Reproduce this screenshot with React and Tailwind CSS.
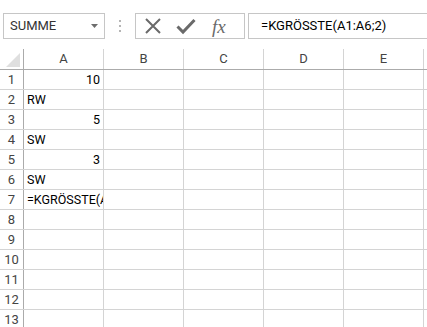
import React from 'react';

const cols = ['A', 'B', 'C', 'D', 'E'];

const data = {
  1: { v: '10', right: true },
  2: { v: 'RW' },
  3: { v: '5', right: true },
  4: { v: 'SW' },
  5: { v: '3', right: true },
  6: { v: 'SW' },
  7: { v: '=KGRÖSSTE(A1:A6;2)' },
};

const rows = Array.from({ length: 13 }, (_, i) => i + 1);

const Toolbar = () => (
  <div className="flex h-[49px] items-start pt-[13px] bg-white">
    {/* name box */}
    <div className="ml-[3px] w-[102px] h-[26px] border border-[#c6c6c6] flex items-center justify-between pl-[6px] pr-[6px]">
      <span className="text-[13px] text-[#333]">SUMME</span>
      <svg width="7" height="4" viewBox="0 0 7 4">
        <polygon points="0,0 7,0 3.5,4" fill="#6d6d6d" />
      </svg>
    </div>

    {/* grip dots */}
    <div className="w-[30px] h-[26px] flex flex-col items-center justify-center gap-[3px]">
      <div className="w-[2px] h-[2px] bg-[#b5b5b5]" />
      <div className="w-[2px] h-[2px] bg-[#b5b5b5]" />
      <div className="w-[2px] h-[2px] bg-[#b5b5b5]" />
    </div>

    {/* cancel / enter / fx */}
    <div className="w-[110px] h-[26px] border border-[#c6c6c6] flex items-center pl-[8px]">
      <svg width="18" height="18" viewBox="0 0 18 18" className="mr-[14px]">
        <path d="M2 2 L16 16 M16 2 L2 16" stroke="#6a6a6a" strokeWidth="2" />
      </svg>
      <svg width="20" height="18" viewBox="0 0 20 18" className="mr-[16px]">
        <path d="M1.5 9.5 L7 15 L18.5 3" stroke="#6a6a6a" strokeWidth="3" fill="none" />
      </svg>
      <span className="text-[19px] italic text-[#6a6a6a] leading-none font-['Liberation_Serif',serif]">fx</span>
    </div>

    {/* formula input */}
    <div className="ml-[3px] flex-1 h-[26px] border-y border-l border-[#c6c6c6] flex items-center pl-[12px]">
      <span className="text-[13px] text-black">=KGRÖSSTE(A1:A6;2)</span>
    </div>
  </div>
);

const HeaderRow = () => (
  <div className="flex h-[21px] border-b border-[#ababab]">
    <div className="w-[24px] border-r border-[#ababab] relative">
      <svg width="14" height="14" viewBox="0 0 14 14" className="absolute right-[3px] bottom-[2px]">
        <polygon points="14,0 14,14 0,14" fill="#dfdfdf" />
      </svg>
    </div>
    {cols.map((c) => (
      <div
        key={c}
        className="w-[80px] border-r border-[#d4d4d4] flex items-center justify-center text-[13px] text-[#444]"
      >
        {c}
      </div>
    ))}
    <div className="flex-1" />
  </div>
);

const Row = ({ n }) => {
  const cell = data[n];
  return (
    <div className="flex h-[20px] border-b border-[#d4d4d4]">
      <div className="w-[24px] border-r border-[#ababab] flex items-end justify-center pb-[1px] text-[13px] text-[#444] leading-[17px]">
        {n}
      </div>
      {cols.map((c, i) => (
        <div
          key={c}
          className={`w-[80px] border-r border-[#d4d4d4] flex items-end pb-[1px] leading-[17px] text-[12.5px] text-black ${
            i === 0 && cell?.right ? 'justify-end pr-[3px]' : 'pl-[3px]'
          } overflow-hidden whitespace-nowrap`}
        >
          {i === 0 && cell ? cell.v : ''}
        </div>
      ))}
      <div className="flex-1" />
    </div>
  );
};

export default function App() {
  return (
    <div className="w-[427px] h-[327px] overflow-hidden bg-white font-['Roboto',sans-serif]">
      <Toolbar />
      <HeaderRow />
      {rows.map((n) => (
        <Row key={n} n={n} />
      ))}
    </div>
  );
}
